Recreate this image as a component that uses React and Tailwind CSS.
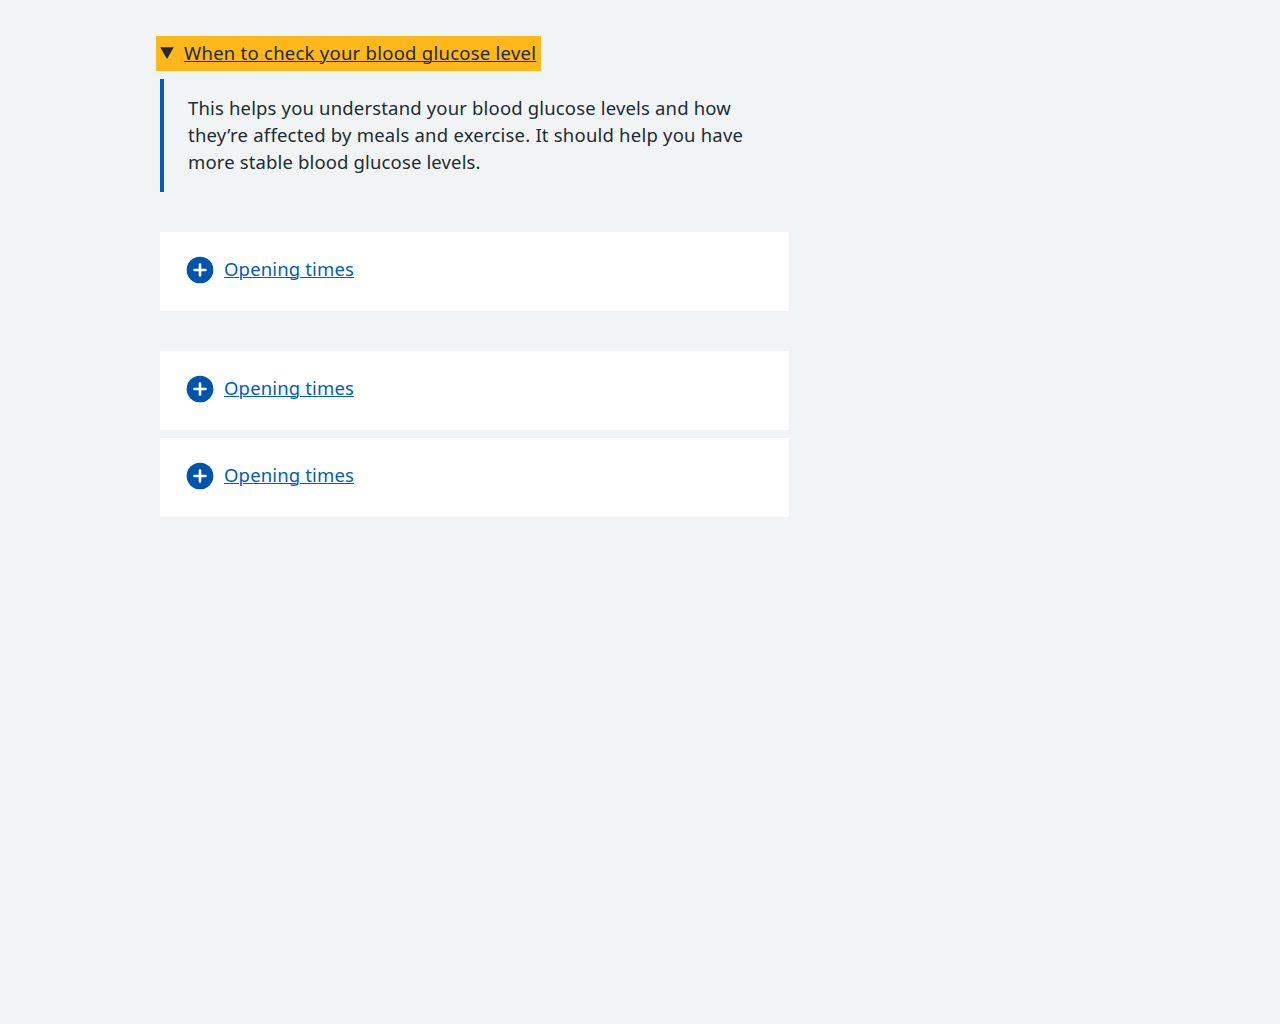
function PlusIcon() {
  return (
    <svg className="size-8 shrink-0" viewBox="0 0 32 32" aria-hidden="true">
      <circle cx="16" cy="16" r="13.35" fill="#0055aa" />
      <path d="M16 10.5v11M10.5 16h11" stroke="#fff" strokeWidth="2.6" strokeLinecap="round" />
    </svg>
  );
}

function Expander() {
  return (
    <section className="h-[79px] w-[629px] bg-white pl-6 pt-[22px]">
      <button type="button" className="flex h-8 items-center gap-2 text-[#005eb8]">
        <PlusIcon />
        <span className="mb-1 whitespace-nowrap text-[18.5px] leading-[27px] tracking-[0.15px] underline decoration-1 underline-offset-1">Opening times</span>
      </button>
    </section>
  );
}

export default function App() {
  return (
    <main className="min-h-screen bg-[#f0f4f5] px-40 pt-9 font-['Noto_Sans',sans-serif] text-[18.5px] leading-[27px] text-[#212b32]">
      <section>
        <button type="button" className="-ml-1 flex h-[35px] w-[385px] items-center bg-[#ffb81c] pl-1 text-left">
          <svg className="mb-px h-[12px] w-[14px] shrink-0" viewBox="0 0 14 12" aria-hidden="true">
            <path d="M0.2 0.3h13.6L7 11.9z" fill="#212b32" />
          </svg>
          <span className="mb-0.5 ml-[10px] whitespace-nowrap tracking-[0.25px] underline decoration-1 underline-offset-1">When to check your blood glucose level</span>
        </button>
        <div className="mt-2 h-[113px] w-[629px] border-l-4 border-[#005eb8] pl-6 pt-[15px]">
          <p className="whitespace-nowrap">
            <span className="block w-fit tracking-[0.16px]">This helps you understand your blood glucose levels and how</span>
            <span className="block w-fit tracking-[0.21px]">they’re affected by meals and exercise. It should help you have</span>
            <span className="block w-fit tracking-[0.14px]">more stable blood glucose levels.</span>
          </p>
        </div>
      </section>
      <div className="mt-10">
        <Expander />
      </div>
      <div className="mt-10 flex flex-col gap-2">
        <Expander />
        <Expander />
      </div>
    </main>
  );
}
